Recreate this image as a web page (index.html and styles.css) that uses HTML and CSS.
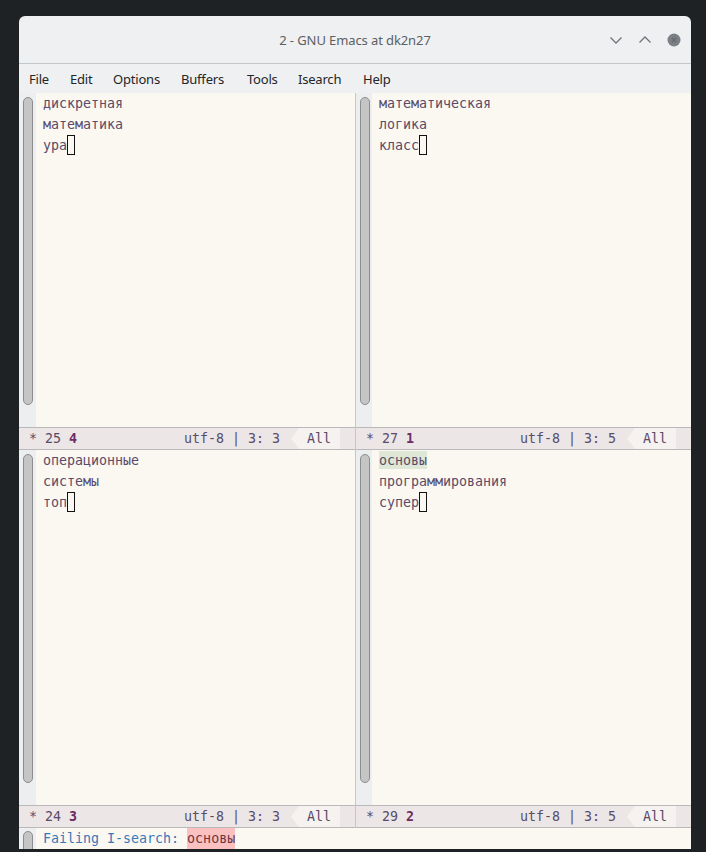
FILE: index.html
```html
<!DOCTYPE html>
<html>
<head>
<meta charset="utf-8">
<link rel="stylesheet" href="styles.css">
</head>
<body>
<div class="frame">
  <div class="titlebar">
    <div></div>
    <div class="title">2 - GNU Emacs at dk2n27</div>
    <div class="controls">
      <svg width="14" height="10" viewBox="0 0 14 10"><path d="M1.5 2.5 L7 8 L12.5 2.5" fill="none" stroke="#6d747b" stroke-width="1.3"/></svg>
      <svg width="14" height="10" viewBox="0 0 14 10"><path d="M1.5 7.5 L7 2 L12.5 7.5" fill="none" stroke="#6d747b" stroke-width="1.3"/></svg>
      <svg width="14" height="14" viewBox="0 0 14 14"><circle cx="7" cy="7" r="6.5" fill="#7b8087"/><path d="M4.8 4.8 L9.2 9.2 M9.2 4.8 L4.8 9.2" stroke="#676b72" stroke-width="1.4"/></svg>
    </div>
  </div>
  <div class="menubar">
    <span class="m-file">File</span><span class="m-edit">Edit</span><span class="m-options">Options</span><span class="m-buffers">Buffers</span><span class="m-tools">Tools</span><span class="m-isearch">Isearch</span><span class="m-help">Help</span>
  </div>
  <div class="row row-top">
    <div class="win win-left">
      <div class="body">
        <div class="gutter"><div class="thumb"></div></div>
        <div class="text">
          <div class="line">дискретная</div>
          <div class="line">математика</div>
          <div class="line">ура<span class="cursor"></span></div>
        </div>
      </div>
      <div class="modeline">
        <span class="ml-left">* 25 <b>4</b></span>
        <span class="ml-right">utf-8 | 3: 3</span>
        <span class="ml-box">All</span>
        <span class="ml-tail"></span>
      </div>
    </div>
    <div class="win win-right">
      <div class="body">
        <div class="gutter"><div class="thumb"></div></div>
        <div class="text">
          <div class="line">математическая</div>
          <div class="line">логика</div>
          <div class="line">класс<span class="cursor"></span></div>
        </div>
      </div>
      <div class="modeline">
        <span class="ml-left">* 27 <b>1</b></span>
        <span class="ml-right">utf-8 | 3: 5</span>
        <span class="ml-box">All</span>
        <span class="ml-tail"></span>
      </div>
    </div>
  </div>
  <div class="row row-bottom">
    <div class="win win-left">
      <div class="body">
        <div class="gutter"><div class="thumb"></div></div>
        <div class="text">
          <div class="line">операционные</div>
          <div class="line">системы</div>
          <div class="line">топ<span class="cursor"></span></div>
        </div>
      </div>
      <div class="modeline">
        <span class="ml-left">* 24 <b>3</b></span>
        <span class="ml-right">utf-8 | 3: 3</span>
        <span class="ml-box">All</span>
        <span class="ml-tail"></span>
      </div>
    </div>
    <div class="win win-right">
      <div class="body">
        <div class="gutter"><div class="thumb"></div></div>
        <div class="text">
          <div class="line"><span class="match">основы</span></div>
          <div class="line">программирования</div>
          <div class="line">супер<span class="cursor"></span></div>
        </div>
      </div>
      <div class="modeline">
        <span class="ml-left">* 29 <b>2</b></span>
        <span class="ml-right">utf-8 | 3: 5</span>
        <span class="ml-box">All</span>
        <span class="ml-tail"></span>
      </div>
    </div>
  </div>
  <div class="minibuf">
    <div class="gutter"><div class="thumb"></div></div>
    <div class="text">
      <div class="line"><span class="prompt">Failing I-search: </span><span class="fail">основы</span></div>
    </div>
  </div>
</div>
</body>
</html>
```
FILE: styles.css
```css
html, body {
  margin: 0;
  padding: 0;
  background: #1f2224;
  height: 852px;
  overflow: hidden;
}
.frame {
  margin: 16px 0 0 19px;
  width: 672px;
  height: 833px;
  background: #eff0f1;
  border-radius: 6px 6px 0 0;
  overflow: hidden;
  display: flex;
  flex-direction: column;
}
.titlebar {
  height: 47px;
  border-bottom: 1px solid #c4c7ca;
  display: grid;
  grid-template-columns: 1fr auto 1fr;
  align-items: center;
  font-family: "Noto Sans", sans-serif;
  font-size: 13px;
  letter-spacing: -0.1px;
}
.title {
  color: #5c5f63;
  padding-top: 1px;
}
.controls {
  display: flex;
  justify-content: flex-end;
  align-items: center;
  gap: 15px;
  padding-right: 10px;
}
.controls svg { display: block; }
.menubar {
  height: 29px;
  display: flex;
  align-items: center;
  padding-left: 10px;
  font-family: "Noto Sans", sans-serif;
  font-size: 13px;
  letter-spacing: -0.2px;
  color: #232629;
}
.menubar span { flex: none; }
.m-file { width: 41px; }
.m-edit { width: 43px; }
.m-options { width: 68px; }
.m-buffers { width: 66px; }
.m-tools { width: 51px; }
.m-isearch { width: 65px; }
.row { display: flex; }
.win {
  display: flex;
  flex-direction: column;
}
.win-left {
  width: 337px;
  border-right: 1px solid #c6c6c6;
  box-sizing: border-box;
}
.win-right { flex: 1; }
.body {
  display: flex;
  background: #fbf8f1;
}
.row-top .body { height: 334px; }
.row-bottom .body { height: 355px; }
.gutter {
  width: 17px;
  background: #eceef0;
  flex: none;
  position: relative;
}
.win-right .gutter { width: 16px; }
.thumb {
  position: absolute;
  left: 4px;
  top: 4px;
  bottom: 22px;
  width: 8px;
  background: #c5c5c6;
  border: 1px solid #8d8d90;
  border-radius: 6px;
}
.text {
  padding-left: 7px;
  font-family: "DejaVu Sans Mono", monospace;
  font-size: 13.3px;
  line-height: 21px;
  color: #594b69;
  flex: 1;
}
.line { height: 21px; white-space: pre; }
.cursor {
  display: inline-block;
  width: 8px;
  height: 20px;
  border: 1px solid #111;
  box-sizing: border-box;
  vertical-align: top;
}
.match {
  background: #dfe8d6;
  padding: 2px 0 1px;
}
.modeline {
  height: 23px;
  box-sizing: border-box;
  border-top: 1px solid #b9b9bb;
  border-bottom: 1px solid #b9b9bb;
  background: #ece6e6;
  display: flex;
  align-items: stretch;
  font-family: "DejaVu Sans Mono", monospace;
  font-size: 13.3px;
  line-height: 21px;
  color: #594b69;
  white-space: pre;
}
.ml-left { padding-left: 10px; }
.ml-left b { color: #6c2c63; }
.ml-right { margin-left: auto; }
.ml-box {
  margin-left: 11px;
  width: 49px;
  box-sizing: border-box;
  padding-left: 16px;
  background: #f6f2f0;
  clip-path: polygon(0 50%, 8px 0, 100% 0, 100% 100%, 8px 100%);
}
.ml-tail { width: 15px; flex: none; }
.minibuf {
  flex: 1;
  display: flex;
  background: #fbf8f1;
}
.minibuf .thumb { bottom: -20px; top: 3px; }
.prompt {
  color: #3a79b8;
}
.fail {
  display: inline-block;
  height: 21px;
  vertical-align: top;
  background: #fbc1c1;
  color: #6c3545;
}
```
